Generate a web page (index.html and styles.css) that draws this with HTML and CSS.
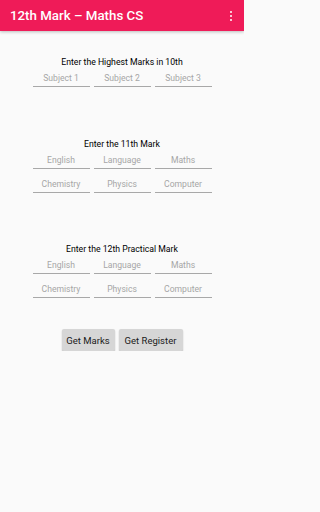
FILE: index.html
```html
<!DOCTYPE html>
<html>
<head>
<meta charset="utf-8">
<link rel="stylesheet" href="styles.css">
</head>
<body>
<header class="appbar">
  <span class="title">12th Mark – Maths CS</span>
  <span class="menu"><i></i><i></i><i></i></span>
</header>
<main class="content">
  <section class="block block-10">
    <div class="label">Enter the Highest Marks in 10th</div>
    <div class="grid">
      <input class="field" placeholder="Subject 1">
      <input class="field" placeholder="Subject 2">
      <input class="field" placeholder="Subject 3">
    </div>
  </section>
  <section class="block block-11">
    <div class="label">Enter the 11th Mark</div>
    <div class="grid">
      <input class="field" placeholder="English">
      <input class="field" placeholder="Language">
      <input class="field" placeholder="Maths">
      <input class="field" placeholder="Chemistry">
      <input class="field" placeholder="Physics">
      <input class="field" placeholder="Computer">
    </div>
  </section>
  <section class="block block-12">
    <div class="label">Enter the 12th Practical Mark</div>
    <div class="grid">
      <input class="field" placeholder="English">
      <input class="field" placeholder="Language">
      <input class="field" placeholder="Maths">
      <input class="field" placeholder="Chemistry">
      <input class="field" placeholder="Physics">
      <input class="field" placeholder="Computer">
    </div>
  </section>
  <div class="actions">
    <button class="btn btn-marks">Get Marks</button>
    <button class="btn btn-register">Get Register</button>
  </div>
</main>
</body>
</html>
```
FILE: styles.css
```css
html, body {
  margin: 0;
  padding: 0;
  background: #fafafa;
  font-family: Roboto, "Liberation Sans", sans-serif;
}
body {
  max-width: 244px;
}
.appbar {
  height: 31px;
  background: #ef1b58;
  display: flex;
  align-items: center;
  justify-content: space-between;
  padding: 0 12px 0 10px;
  box-shadow: 0 1px 3px rgba(0,0,0,0.25);
  position: relative;
}
.title {
  color: #fff;
  font-size: 13.3px;
  font-weight: 500;
}
.menu {
  display: flex;
  flex-direction: column;
  gap: 1.5px;
  margin-top: 1px;
}
.menu i {
  width: 2.5px;
  height: 2.5px;
  background: #fff;
  border-radius: 1px;
  display: block;
}
.content {
  display: flex;
  flex-direction: column;
  align-items: center;
}
.block {
  display: flex;
  flex-direction: column;
  align-items: center;
}
.block-10 { margin-top: 25px; }
.block-11 { margin-top: 51px; }
.block-12 { margin-top: 50px; }
.label {
  font-size: 8.7px;
  line-height: 12px;
  color: #000;
  height: 12px;
}
.grid {
  margin-top: 3px;
  display: grid;
  grid-template-columns: repeat(3, 57px);
  column-gap: 4px;
  row-gap: 8px;
}
.field {
  box-sizing: border-box;
  width: 57px;
  height: 16px;
  border: none;
  border-bottom: 1px solid #a8a8a8;
  background: transparent;
  font-family: Roboto, "Liberation Sans", sans-serif;
  font-size: 8.6px;
  text-align: center;
  padding: 0 0 2px 0;
  margin: 0;
  outline: none;
}
.field::placeholder {
  color: #a6a6a6;
}
.actions {
  margin-top: 31px;
  display: flex;
  gap: 4px;
}
.btn {
  height: 22px;
  border: none;
  border-radius: 2px;
  background: #d6d6d6;
  box-shadow: 0 1px 1.5px rgba(0,0,0,0.25);
  font-family: Roboto, "Liberation Sans", sans-serif;
  font-size: 9.5px;
  color: #1a1a1a;
  padding: 0;
  white-space: nowrap;
}
.btn-marks { width: 53px; }
.btn-register { width: 64px; }
```
